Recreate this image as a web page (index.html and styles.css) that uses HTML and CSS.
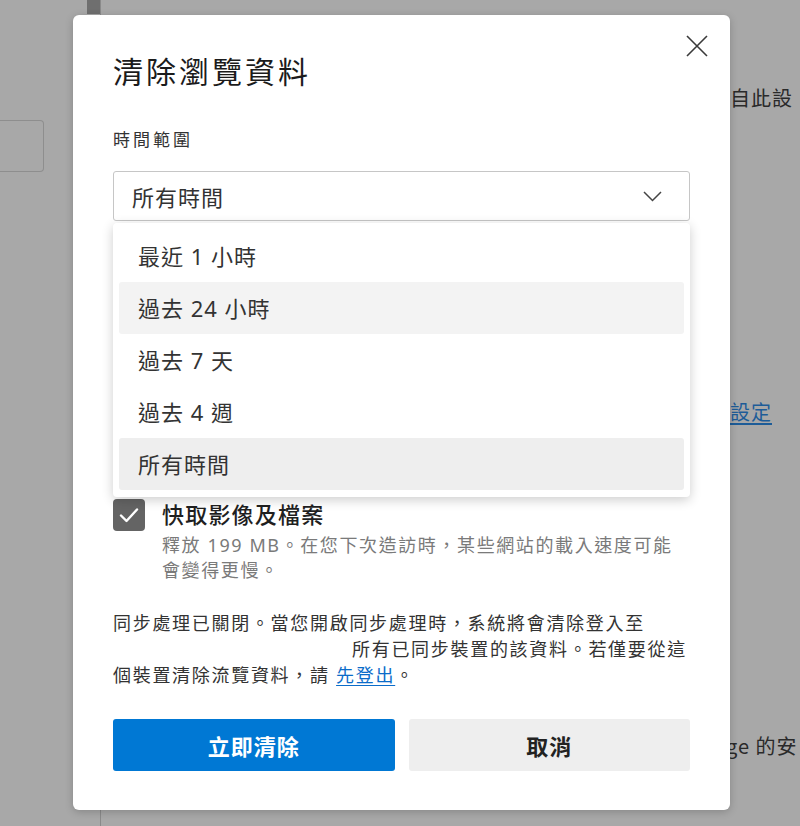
FILE: index.html
```html
<!DOCTYPE html>
<html lang="zh-Hant">
<head>
<meta charset="utf-8">
<title>清除瀏覽資料</title>
<link rel="stylesheet" href="styles.css">
</head>
<body>
<div class="page">
  <aside class="sidebar">
    <div class="scroll-thumb"></div>
    <div class="side-box"></div>
  </aside>
  <main class="main">
    <p class="bg-line bg-l1">自此設</p>
    <p class="bg-line bg-l2"><a class="bg-link">設定</a></p>
    <p class="bg-line bg-l3">ge 的安</p>
  </main>
</div>

<div class="dialog" role="dialog" aria-label="清除瀏覽資料">
  <button class="close" aria-label="關閉">
    <svg width="22" height="22" viewBox="0 0 22 22"><path d="M1 1 L21 21 M21 1 L1 21" stroke="#3a3a3a" stroke-width="1.6" fill="none"/></svg>
  </button>
  <h1 class="title">清除瀏覽資料</h1>
  <div class="label">時間範圍</div>
  <div class="select-wrap">
    <div class="select">
      <span>所有時間</span>
      <svg width="19" height="11" viewBox="0 0 19 11"><path d="M1 1 L9.5 9.5 L18 1" stroke="#444" stroke-width="1.5" fill="none"/></svg>
    </div>
    <ul class="menu">
      <li class="item">最近 1 小時</li>
      <li class="item hover">過去 24 小時</li>
      <li class="item">過去 7 天</li>
      <li class="item">過去 4 週</li>
      <li class="item selected">所有時間</li>
    </ul>
  </div>
  <div class="option">
    <span class="checkbox">
      <svg width="20" height="16" viewBox="0 0 20 16"><path d="M2 8.5 L7.5 14 L18 2.5" stroke="#fff" stroke-width="2.4" fill="none" stroke-linecap="round" stroke-linejoin="round"/></svg>
    </span>
    <div class="opt-text">
      <div class="opt-title">快取影像及檔案</div>
      <div class="opt-desc">釋放 199 MB。在您下次造訪時，某些網站的載入速度可能<br>會變得更慢。</div>
    </div>
  </div>
  <p class="sync">同步處理已關閉。當您開啟同步處理時，系統將會清除登入至<span class="redacted"></span>所有已同步裝置的該資料。若僅要從這<br>個裝置清除流覽資料，請 <a class="link">先登出</a>。</p>
  <div class="actions">
    <button class="btn primary">立即清除</button>
    <button class="btn secondary">取消</button>
  </div>
</div>
</body>
</html>
```
FILE: styles.css
```css
* { box-sizing: border-box; }
html, body {
  margin: 0;
  padding: 0;
}
body {
  width: 800px;
  height: 826px;
  overflow: hidden;
  background: #a8a8a8;
  font-family: "Noto Sans", "Noto Sans CJK TC", sans-serif;
  position: relative;
}
.page {
  display: grid;
  grid-template-columns: 101px 1fr;
  height: 826px;
}
.sidebar {
  border-right: 1px solid #8a8a8a;
  display: flex;
  flex-direction: column;
}
.scroll-thumb {
  width: 13px;
  height: 14px;
  background: #6f6f6f;
  align-self: flex-end;
}
.side-box {
  margin-top: 106px;
  width: 44px;
  height: 52px;
  border: 1px solid #8e8e8e;
  border-left: none;
  border-radius: 0 4px 4px 0;
}
.main {
  padding-left: 629px;
  overflow: hidden;
}
.bg-line {
  margin: 0;
  font-family: "Noto Sans CJK TC", sans-serif;
  font-size: 20px;
  line-height: 24px;
  letter-spacing: 1px;
  color: #2a2a2a;
  white-space: nowrap;
}
.bg-l1 { margin-top: 86px; }
.bg-l2 { margin-top: 290px; }
.bg-l3 { margin-top: 310px; margin-left: -4px; }
.bg-link {
  color: #1d5c98;
  text-decoration: underline;
  text-underline-offset: 3px;
}

.dialog {
  position: absolute;
  left: 73px;
  top: 15px;
  width: 657px;
  padding: 37px 40px 39px;
  background: #fff;
  border-radius: 6px;
  box-shadow: 0 2px 8px rgba(0,0,0,0.2);
  color: #333;
}
.close {
  position: absolute;
  top: 20px;
  right: 22px;
  width: 22px;
  height: 22px;
  padding: 0;
  border: none;
  background: none;
  display: flex;
}
.title {
  margin: 0;
  font-family: "Noto Sans CJK TC", sans-serif;
  font-size: 30px;
  line-height: 36px;
  font-weight: 400;
  letter-spacing: 3px;
  color: #1b1b1b;
}
.label {
  margin-top: 40px;
  font-family: "Noto Sans CJK TC", sans-serif;
  font-size: 17px;
  line-height: 22px;
  letter-spacing: 3px;
  color: #333;
}
.select-wrap {
  position: relative;
  margin-top: 21px;
}
.select {
  height: 50px;
  border: 1px solid #c6c6c6;
  border-radius: 3px;
  padding: 0 27px 0 18px;
  display: flex;
  align-items: center;
  justify-content: space-between;
  font-size: 22px;
  letter-spacing: 1px;
  color: #333;
}
.menu {
  position: absolute;
  top: calc(100% + 2px);
  left: 0;
  right: 0;
  margin: 0;
  padding: 7px 6px;
  list-style: none;
  background: #fff;
  border-radius: 4px;
  box-shadow: 0 3px 12px rgba(0,0,0,0.2);
  z-index: 2;
}
.item {
  height: 52px;
  padding-left: 19px;
  padding-bottom: 3px;
  display: flex;
  align-items: center;
  font-size: 22px;
  letter-spacing: 1px;
  color: #333;
  border-radius: 3px;
}
.item.hover { background: #f3f3f3; }
.item.selected { background: #eeeeee; }

.option {
  margin-top: 278px;
  display: flex;
  gap: 17px;
  align-items: flex-start;
}
.checkbox {
  flex: none;
  width: 32px;
  height: 32px;
  background: #646464;
  border-radius: 4px;
  display: flex;
  align-items: center;
  justify-content: center;
}
.opt-title {
  font-size: 22px;
  line-height: 30px;
  font-weight: 500;
  letter-spacing: 1.2px;
  color: #1f1f1f;
}
.opt-desc {
  margin-top: 4px;
  font-size: 18px;
  line-height: 25px;
  letter-spacing: 1.6px;
  color: #7a7a7a;
}
.sync {
  margin: 27px 0 0;
  font-size: 18px;
  line-height: 26px;
  letter-spacing: 1.7px;
  color: #333;
}
.redacted {
  display: inline-block;
  width: 239px;
  height: 1px;
}
.link {
  color: #0b6cc9;
  text-decoration: underline;
  text-underline-offset: 3px;
}
.actions {
  margin-top: 31px;
  display: grid;
  grid-template-columns: 1fr 1fr;
  gap: 14px;
}
.btn {
  height: 52px;
  border: none;
  border-radius: 3px;
  font-family: "Noto Sans CJK TC", sans-serif;
  font-size: 22px;
  letter-spacing: 1px;
  font-weight: 700;
}
.primary {
  background: #0078d4;
  color: #fff;
}
.secondary {
  background: #eeeeee;
  color: #222;
}
```
